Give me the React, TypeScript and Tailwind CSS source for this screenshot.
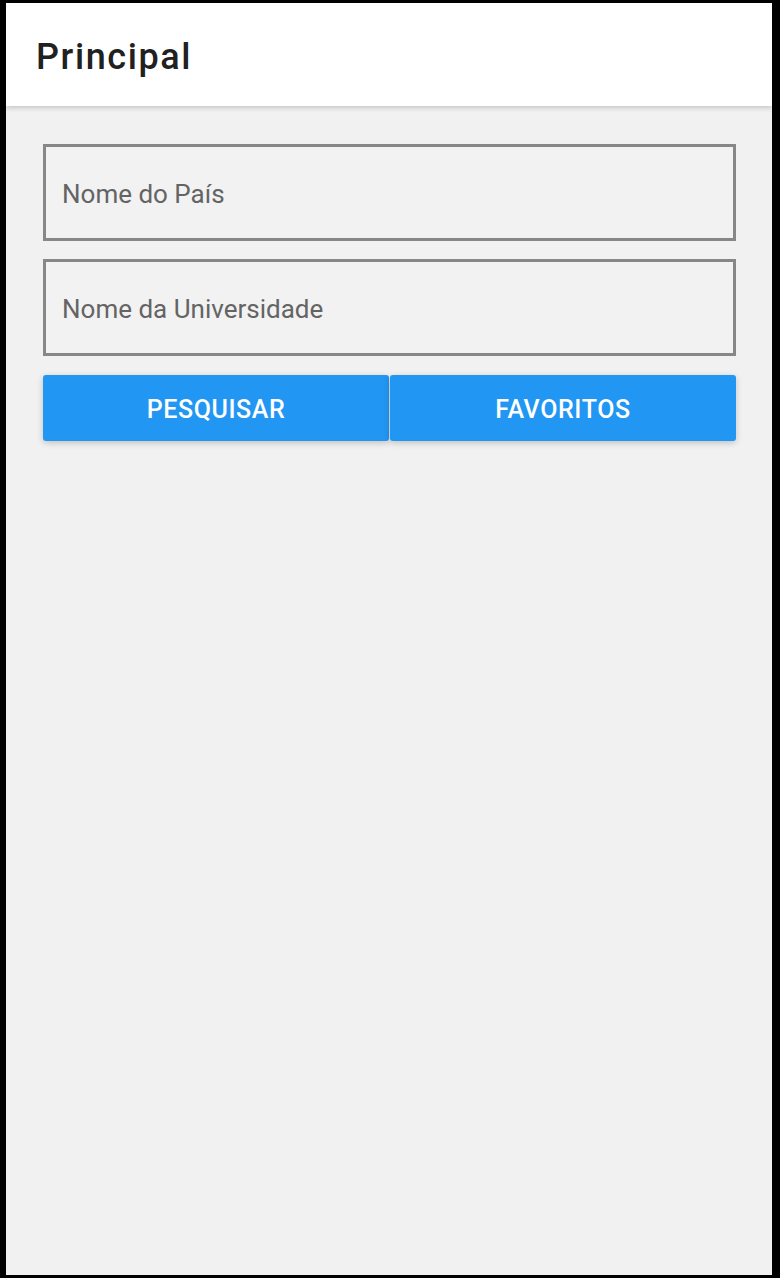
export default function App() {
  return (
    <div className="w-[780px] h-[1278px] bg-black pl-[6px] pr-[8px] pt-[3px] pb-[3px] font-['Roboto',sans-serif]">
      <div className="flex flex-col h-full bg-[#f1f1f1]">
        {/* Toolbar */}
        <header className="h-[103px] bg-white flex items-center pl-[30px] shadow-[0_2px_5px_rgba(0,0,0,0.18)] relative z-10">
          <h1 className="text-[36px] font-medium text-[#212121] tracking-[1.6px] mt-[4px]">Principal</h1>
        </header>

        <main className="flex flex-col pt-[38px] pl-[37px] pr-[36px]">
          <div className="h-[97px] border-[3px] border-[#878787] bg-[#f2f2f2] flex items-center pl-[16px]">
            <span className="text-[26px] text-[#646464] mt-[3px]">Nome do País</span>
          </div>
          <div className="h-[97px] mt-[18px] border-[3px] border-[#878787] bg-[#f2f2f2] flex items-center pl-[16px]">
            <span className="text-[26px] text-[#646464] mt-[3px]">Nome da Universidade</span>
          </div>

          <div className="mt-[19px] flex gap-[1px]">
            <button className="flex-1 h-[66px] bg-[#2196f3] rounded-[3px] text-white text-[25px] font-medium tracking-[0.6px] shadow-[0_2px_6px_rgba(0,0,0,0.2)] pt-[3px]">
              PESQUISAR
            </button>
            <button className="flex-1 h-[66px] bg-[#2196f3] rounded-[3px] text-white text-[25px] font-medium tracking-[0.6px] shadow-[0_2px_6px_rgba(0,0,0,0.2)] pt-[3px]">
              FAVORITOS
            </button>
          </div>
        </main>
      </div>
    </div>
  );
}
